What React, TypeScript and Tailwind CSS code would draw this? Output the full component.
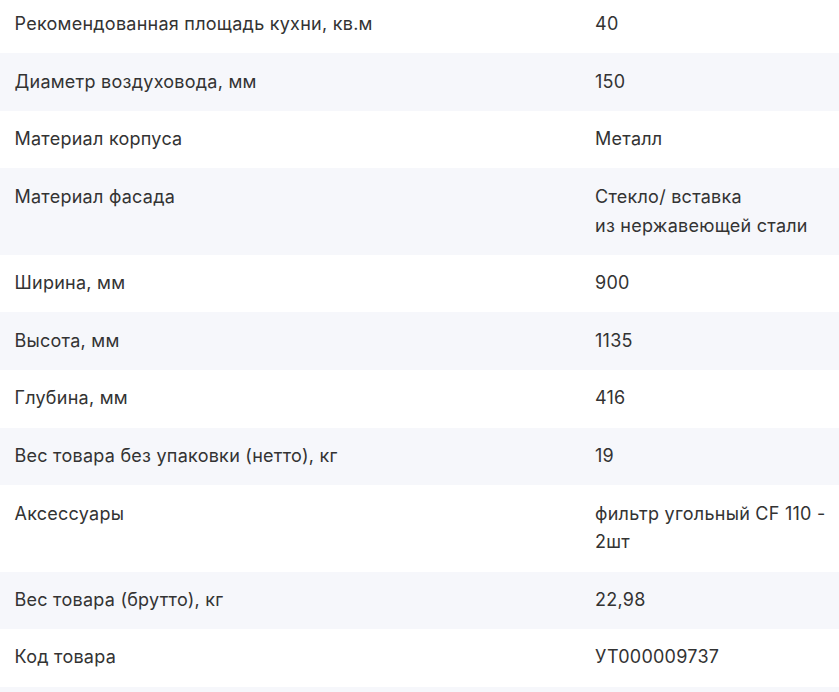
import React from "react";

const rows: [string, React.ReactNode][] = [
  ["Рекомендованная площадь кухни, кв.м", "40"],
  ["Диаметр воздуховода, мм", "150"],
  ["Материал корпуса", "Металл"],
  ["Материал фасада", <>Стекло/ вставка<br />из нержавеющей стали</>],
  ["Ширина, мм", "900"],
  ["Высота, мм", "1135"],
  ["Глубина, мм", "416"],
  ["Вес товара без упаковки (нетто), кг", "19"],
  ["Аксессуары", <>фильтр угольный CF 110 -<br />2шт</>],
  ["Вес товара (брутто), кг", "22,98"],
  ["Код товара", "УТ000009737"],
];

export default function App() {
  return (
    <div className="w-[839px] h-[692px] overflow-hidden bg-white" style={{ fontFamily: "Inter, 'Noto Sans', sans-serif" }}>
      <div className="-mt-[4.3px] flex flex-col text-[18px] leading-[28.8px] tracking-[0.25px] text-[#333333]">
        {rows.map(([k, v], i) => (
          <div key={i} className={`flex ${i % 2 === 1 ? "bg-[#f6f7fb]" : "bg-white"}`}>
            <div className="w-[580px] shrink-0 px-[14.5px] py-[14.4px]">{k}</div>
            <div className="flex-1 pl-[15px] pr-[2px] py-[14.4px] whitespace-nowrap">{v}</div>
          </div>
        ))}
        <div className="h-[57.6px] bg-[#f6f7fb]" />
      </div>
    </div>
  );
}
